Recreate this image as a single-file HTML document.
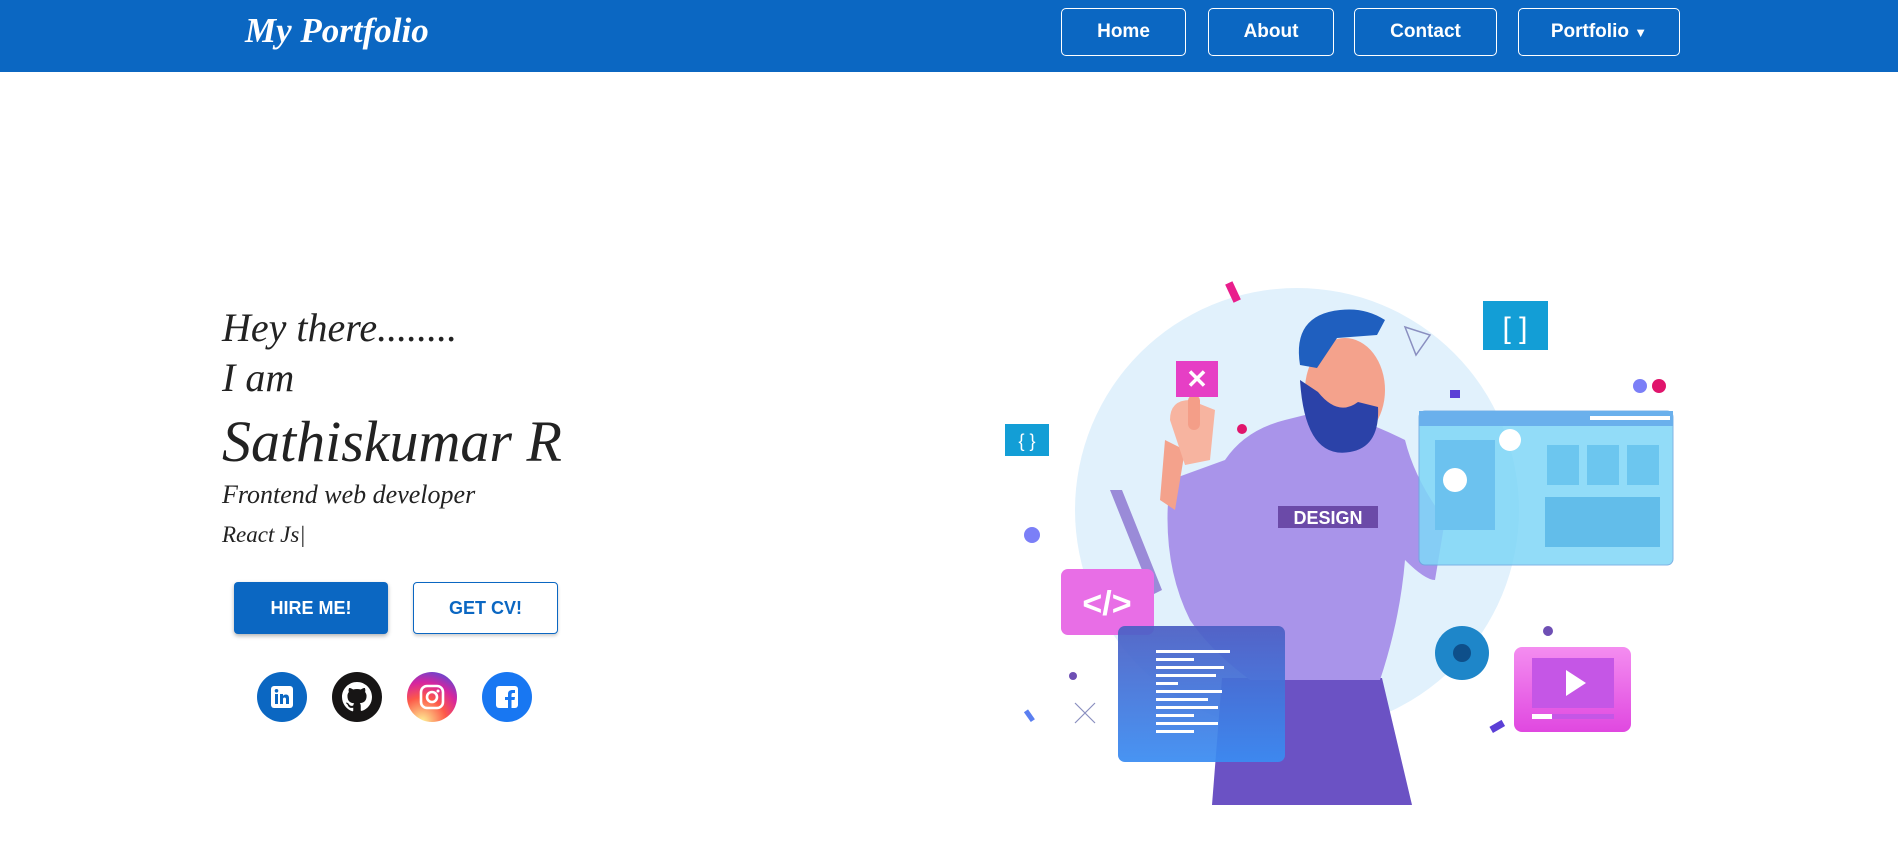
<!DOCTYPE html>
<html><head><meta charset="utf-8"><style>
*{margin:0;padding:0;box-sizing:border-box}
body{width:1898px;height:868px;background:#fff;position:relative;overflow:hidden;font-family:"Liberation Sans",sans-serif}
.hdr{position:absolute;left:0;top:0;width:1898px;height:72px;background:#0b67c2}
.logo{position:absolute;left:245px;top:11px;color:#fff;font:italic bold 35px "Liberation Serif",serif}
.nav{position:absolute;top:8px;height:48px;border:1.5px solid #fff;border-radius:5px;color:#fff;font-size:19px;font-weight:bold;display:flex;align-items:center;justify-content:center}
.s{position:absolute;left:222px;color:#222;font-family:"Liberation Serif",serif;font-style:italic;white-space:nowrap}
.btn{position:absolute;top:582px;height:52px;border-radius:4px;font-size:18px;font-weight:bold;display:flex;align-items:center;justify-content:center}
.c{position:absolute;top:672px;width:50px;height:50px;border-radius:50%;display:flex;align-items:center;justify-content:center}
</style></head><body>
<div class="hdr">
<div class="logo">My Portfolio</div>
<div class="nav" style="left:1061px;width:125px">Home</div>
<div class="nav" style="left:1208px;width:126px">About</div>
<div class="nav" style="left:1354px;width:143px">Contact</div>
<div class="nav" style="left:1518px;width:162px">Portfolio&nbsp;<span style="font-size:13px">▼</span></div>
</div>
<div class="s" style="top:304px;font-size:40px">Hey there........</div>
<div class="s" style="top:354px;font-size:40px">I am</div>
<div class="s" style="top:408px;font-size:58px">Sathiskumar R</div>
<div class="s" style="top:480px;font-size:26px">Frontend web developer</div>
<div class="s" style="top:522px;font-size:23px">React Js|</div>
<div class="btn" style="left:234px;width:154px;background:#0b67c2;color:#fff;box-shadow:0 2px 4px rgba(0,0,0,.3)">HIRE ME!</div>
<div class="btn" style="left:413px;width:145px;border:1.5px solid #0b67c2;color:#0b67c2;box-shadow:0 2px 3px rgba(0,0,0,.2)">GET CV!</div>
<div class="c" style="left:257px;background:#0b67c2"><svg width="24" height="24"><rect x="1" y="1" width="22" height="22" rx="3" fill="#fff"/><rect x="5" y="9" width="3" height="10" fill="#0b67c2"/><circle cx="6.5" cy="5.8" r="1.8" fill="#0b67c2"/><path d="M10 9h3v2c1-2 6-2.5 6 2v6h-3v-5c0-2-3-2-3 0v5h-3z" fill="#0b67c2"/></svg></div>
<div class="c" style="left:332px;background:#171515"><svg width="30" height="30" viewBox="0 0 16 16"><path fill="#fff" d="M8 0C3.6 0 0 3.6 0 8c0 3.5 2.300 6.500 5.500 7.600.4.1.5-.2.5-.4v-1.5c-2.2.5-2.7-1-2.7-1-.4-.9-.9-1.2-.9-1.2-.7-.5.1-.5.1-.5.8.1 1.2.8 1.2.8.7 1.3 1.9.9 2.3.7.1-.5.3-.9.5-1.1-1.8-.2-3.6-.9-3.6-4 0-.9.3-1.6.8-2.1-.1-.2-.4-1 .1-2.1 0 0 .7-.2 2.2.8.6-.2 1.3-.3 2-.3s1.4.1 2 .3c1.5-1 2.2-.8 2.2-.8.4 1.1.2 1.9.1 2.1.5.6.8 1.3.8 2.1 0 3.1-1.9 3.7-3.6 3.9.3.3.5.8.5 1.5v2.2c0 .2.1.5.6.4C13.7 14.5 16 11.5 16 8c0-4.4-3.6-8-8-8z"/></svg></div>
<div class="c" style="left:407px;background:radial-gradient(circle at 30% 100%,#fdf497 0%,#fd5949 40%,#d6249f 65%,#285aeb 100%)"><svg width="26" height="26"><rect x="2" y="2" width="22" height="22" rx="6" fill="none" stroke="#fff" stroke-width="2.6"/><circle cx="13" cy="13" r="5" fill="none" stroke="#fff" stroke-width="2.6"/><circle cx="19" cy="7" r="1.5" fill="#fff"/></svg></div>
<div class="c" style="left:482px;background:#1877f2"><svg width="24" height="24"><rect x="1" y="1" width="22" height="22" rx="3" fill="#fff"/><path d="M13 23v-8h-3v-3h3V9c0-3 2-4 4.500-4H20v3h-2c-1 0-1.500.5-1.500 1.500V12H20l-.5 3h-3v8z" fill="#1877f2"/></svg></div>
<svg style="position:absolute;left:0;top:0" width="1898" height="868">
<circle cx="1297" cy="510" r="222" fill="#e1f1fc"/>
<rect x="1229" y="282" width="8" height="20" fill="#e91e8c" transform="rotate(-25 1233 292)"/>
<path d="M1405 327l25 8-14 20z" fill="none" stroke="#8a8fc0" stroke-width="1.5"/>
<rect x="1483" y="301" width="65" height="49" fill="#139ed6"/><text x="1515" y="338" font-size="30" fill="#fff" text-anchor="middle" font-family="Liberation Sans">[ ]</text>
<rect x="1005" y="424" width="44" height="32" fill="#139ed6"/><text x="1027" y="447" font-size="18" fill="#fff" text-anchor="middle" font-family="Liberation Sans">{ }</text>
<circle cx="1640" cy="386" r="7" fill="#7b7ff7"/><circle cx="1659" cy="386" r="7" fill="#e0156c"/>
<circle cx="1032" cy="535" r="8" fill="#7b7ff7"/><circle cx="1242" cy="429" r="5" fill="#e0156c"/>
<rect x="1450" y="390" width="10" height="8" fill="#5b3fd6"/>
<path d="M1110 490l12 0 40 100-10 5z" fill="#9a8bd8"/>
<path d="M1222 678h160l30 127h-200z" fill="#6b52c4"/>
<path d="M1170 480q-10 80 20 140 20 30 60 60h130q20-60 25-120 20 20 30 20l10-60q-30-40-40-80-40-20-80-30l-40 10q-40 10-60 40z" fill="#a994ea"/>
<path d="M1165 440l20 10-10 60-15-10z" fill="#f4a28c"/>
<path d="M1170 420q0-20 20-20l25 10-5 50-25 5z" fill="#f7b4a0"/>
<rect x="1188" y="395" width="12" height="35" rx="6" fill="#f49e88"/>
<ellipse cx="1345" cy="390" rx="40" ry="52" fill="#f4a28c"/>
<path d="M1300 380q5 80 50 72 30-5 28-45l-20-5q-20 15-40-10z" fill="#2b42a8"/>
<path d="M1300 365q-8-50 40-55 25-3 45 10l-8 15-40 3-20 30z" fill="#1f5fbf"/>
<rect x="1278" y="506" width="100" height="22" fill="#6b4aa8"/><text x="1328" y="524" font-size="18" font-weight="bold" fill="#fff" text-anchor="middle" font-family="Liberation Sans">DESIGN</text>
<rect x="1176" y="361" width="42" height="36" fill="#e63fc5"/><text x="1197" y="388" font-size="26" font-weight="bold" fill="#fff" text-anchor="middle" font-family="Liberation Sans">✕</text>
<rect x="1419" y="411" width="254" height="154" rx="6" fill="#7fd7f7" opacity=".85" stroke="#6aa6e0"/>
<rect x="1419" y="411" width="254" height="15" fill="#6ab0ec"/>
<rect x="1590" y="416" width="80" height="4" fill="#fff"/>
<rect x="1435" y="440" width="60" height="90" fill="#6cc2ef"/>
<rect x="1547" y="445" width="32" height="40" fill="#6cc6ef"/><rect x="1587" y="445" width="32" height="40" fill="#6cc6ef"/><rect x="1627" y="445" width="32" height="40" fill="#6cc6ef"/>
<rect x="1545" y="497" width="115" height="50" fill="#62bdea"/>
<circle cx="1455" cy="480" r="12" fill="#fff"/><circle cx="1510" cy="440" r="11" fill="#fff"/>
<rect x="1061" y="569" width="93" height="66" rx="7" fill="#e86ee6"/><text x="1107" y="615" font-size="34" font-weight="bold" fill="#fff" text-anchor="middle" font-family="Liberation Sans">&lt;/&gt;</text>
<defs><linearGradient id="g" x1="0" y1="0" x2="0" y2="1"><stop offset="0" stop-color="#4c5fc4"/><stop offset="1" stop-color="#3a8cf2"/></linearGradient><linearGradient id="p" x1="0" y1="0" x2="0" y2="1"><stop offset="0" stop-color="#f48df0"/><stop offset="1" stop-color="#e048e0"/></linearGradient></defs>
<rect x="1118" y="626" width="167" height="136" rx="7" fill="url(#g)" opacity=".93"/>
<g fill="#fff"><rect x="1156" y="650" width="74" height="3"/><rect x="1156" y="658" width="38" height="3"/><rect x="1156" y="666" width="68" height="3"/><rect x="1156" y="674" width="60" height="3"/><rect x="1156" y="682" width="22" height="3"/><rect x="1156" y="690" width="66" height="3"/><rect x="1156" y="698" width="52" height="3"/><rect x="1156" y="706" width="62" height="3"/><rect x="1156" y="714" width="38" height="3"/><rect x="1156" y="722" width="62" height="3"/><rect x="1156" y="730" width="38" height="3"/></g>
<rect x="1514" y="647" width="117" height="85" rx="8" fill="url(#p)"/>
<rect x="1532" y="658" width="82" height="50" fill="#c556e6"/><path d="M1566 670l20 13-20 13z" fill="#fff"/><rect x="1532" y="714" width="82" height="5" fill="#c556e6"/><rect x="1532" y="714" width="20" height="5" fill="#fff"/>
<circle cx="1462" cy="653" r="27" fill="#1e86c9"/><circle cx="1462" cy="653" r="9" fill="#0e4f8a"/>
<circle cx="1548" cy="631" r="5" fill="#6e4fb4"/><circle cx="1073" cy="676" r="4" fill="#6e4fb4"/>
<rect x="1490" y="723" width="14" height="7" fill="#5b3fd6" transform="rotate(-30 1497 726)"/>
<path d="M1075 703l20 20M1095 703l-20 20" stroke="#8a8fc0" stroke-width="1.2"/>
<rect x="1027" y="710" width="5" height="12" fill="#5b7ff0" transform="rotate(-35 1029 716)"/>
</svg>
</body></html>
